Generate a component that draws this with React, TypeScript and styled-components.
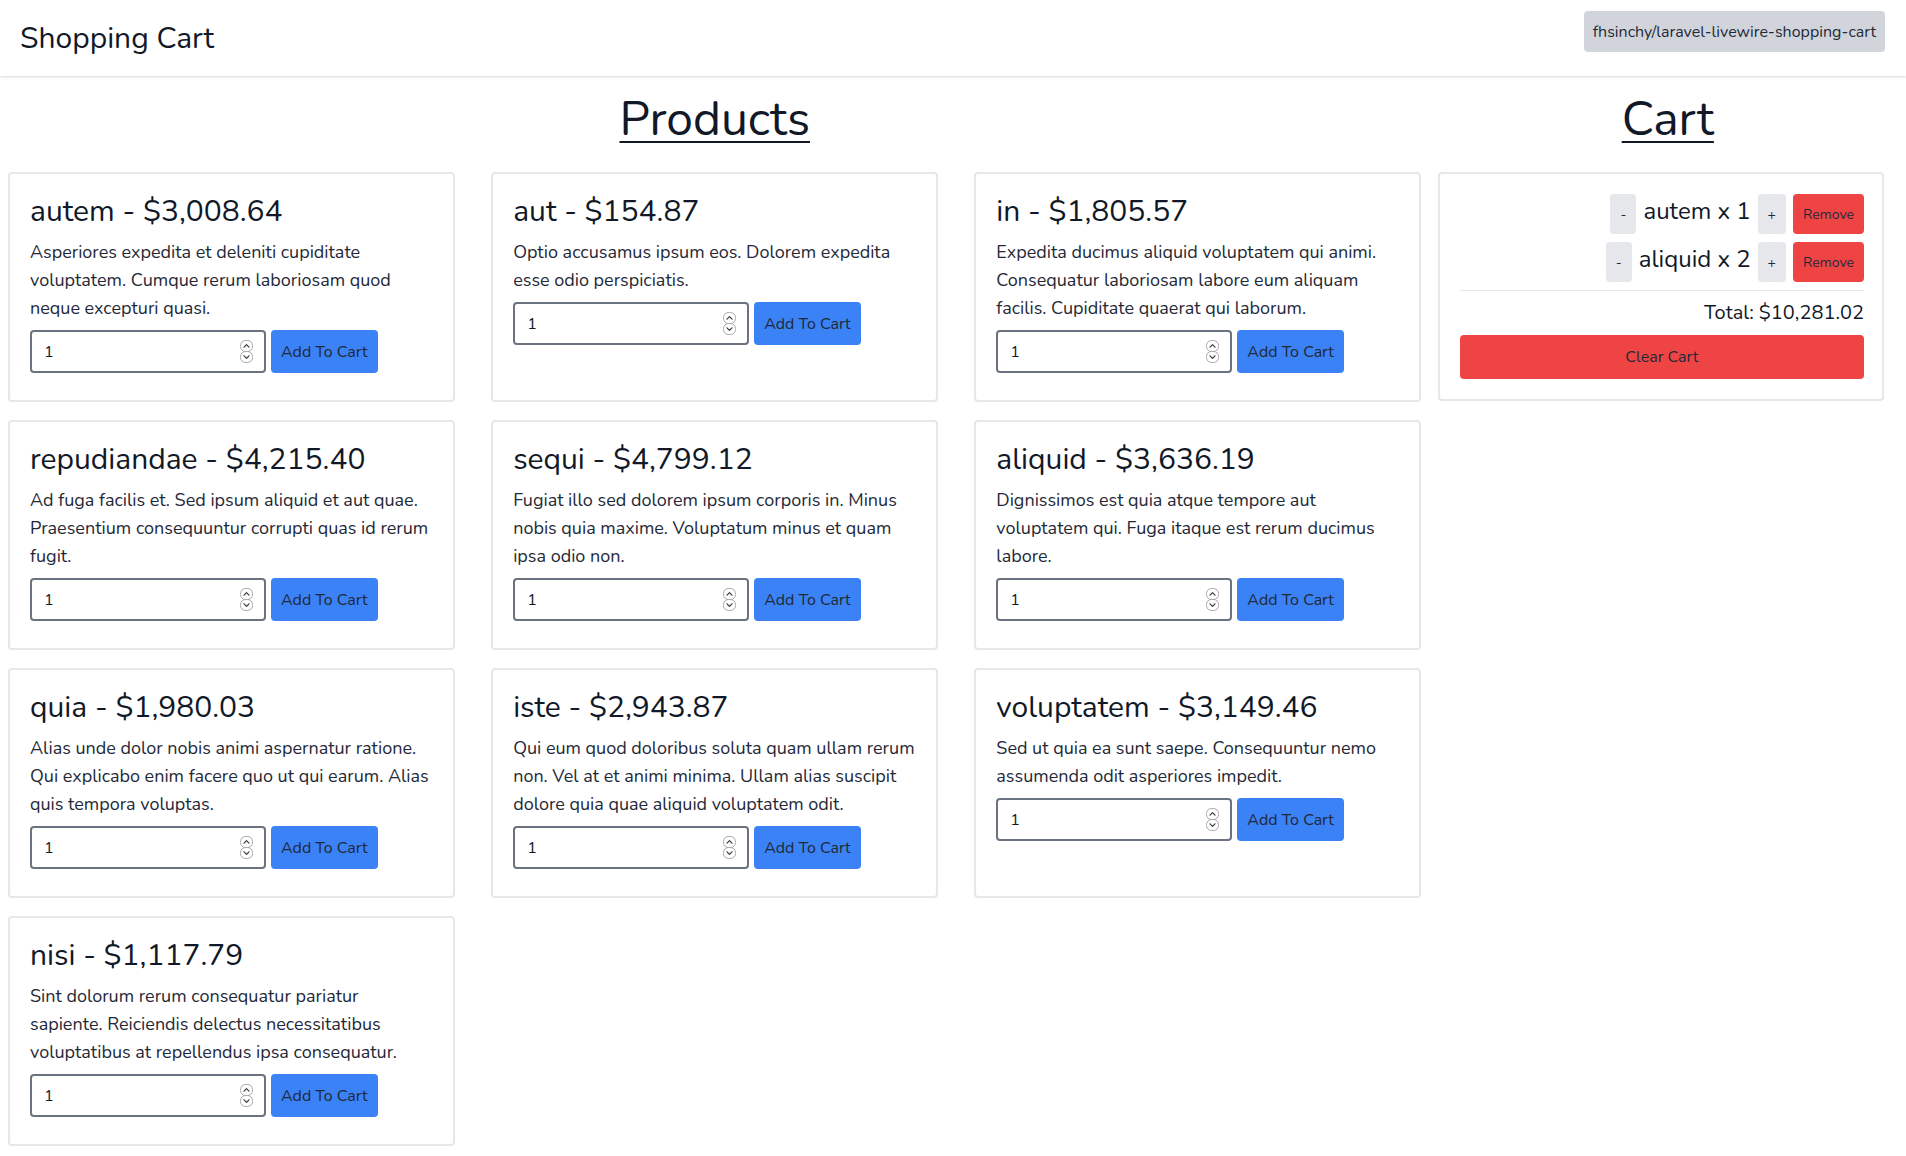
import React from 'react';
import styled, { createGlobalStyle } from 'styled-components';

const GlobalStyle = createGlobalStyle`
    html, body {
        margin: 0;
        padding: 0;
        background: #ffffff;
        font-family: 'Nunito', 'Liberation Sans', Arial, sans-serif;
        color: #111827;
    }
    * {
        box-sizing: border-box;
    }
`;

type Product = {
    name: string;
    price: string;
    description: string;
};

const products: Product[] = [
    {
        name: 'autem',
        price: '$3,008.64',
        description: 'Asperiores expedita et deleniti cupiditate voluptatem. Cumque rerum laboriosam quod neque excepturi quasi.',
    },
    { name: 'aut', price: '$154.87', description: 'Optio accusamus ipsum eos. Dolorem expedita esse odio perspiciatis.' },
    {
        name: 'in',
        price: '$1,805.57',
        description:
            'Expedita ducimus aliquid voluptatem qui animi. Consequatur laboriosam labore eum aliquam facilis. Cupiditate quaerat qui laborum.',
    },
    {
        name: 'repudiandae',
        price: '$4,215.40',
        description: 'Ad fuga facilis et. Sed ipsum aliquid et aut quae. Praesentium consequuntur corrupti quas id rerum fugit.',
    },
    {
        name: 'sequi',
        price: '$4,799.12',
        description: 'Fugiat illo sed dolorem ipsum corporis in. Minus nobis quia maxime. Voluptatum minus et quam ipsa odio non.',
    },
    {
        name: 'aliquid',
        price: '$3,636.19',
        description: 'Dignissimos est quia atque tempore aut voluptatem qui. Fuga itaque est rerum ducimus labore.',
    },
    {
        name: 'quia',
        price: '$1,980.03',
        description:
            'Alias unde dolor nobis animi aspernatur ratione. Qui explicabo enim facere quo ut qui earum. Alias quis tempora voluptas.',
    },
    {
        name: 'iste',
        price: '$2,943.87',
        description:
            'Qui eum quod doloribus soluta quam ullam rerum non. Vel at et animi minima. Ullam alias suscipit dolore quia quae aliquid voluptatem odit.',
    },
    {
        name: 'voluptatem',
        price: '$3,149.46',
        description: 'Sed ut quia ea sunt saepe. Consequuntur nemo assumenda odit asperiores impedit.',
    },
    {
        name: 'nisi',
        price: '$1,117.79',
        description:
            'Sint dolorum rerum consequatur pariatur sapiente. Reiciendis delectus necessitatibus voluptatibus at repellendus ipsa consequatur.',
    },
];

const cartItems = [
    { name: 'autem', quantity: 1 },
    { name: 'aliquid', quantity: 2 },
];

const NavBar = styled.header`
    display: flex;
    justify-content: space-between;
    align-items: flex-start;
    height: 76px;
    padding: 11px 21px 0 20px;
    box-shadow: 0 1px 3px rgba(0, 0, 0, 0.1), 0 1px 2px rgba(0, 0, 0, 0.06);
`;

const Brand = styled.h1`
    margin: 10px 0 0;
    font-size: 30px;
    line-height: 36px;
    font-weight: 400;
    color: #111827;
`;

const RepoBadge = styled.span`
    display: inline-flex;
    align-items: center;
    height: 41px;
    padding: 0 9px;
    border-radius: 4px;
    background: #d1d5db;
    color: #1f2937;
    font-size: 16px;
`;

const Main = styled.main`
    display: flex;
    align-items: flex-start;
`;

const ProductsColumn = styled.section`
    width: 75%;
`;

const CartColumn = styled.section`
    width: 25%;
`;

const SectionHeading = styled.h2`
    margin: 19px 0 29px;
    text-align: center;
    font-size: 48px;
    line-height: 48px;
    font-weight: 400;
    color: #111827;
    text-decoration: underline;
    text-decoration-thickness: 2px;
    text-underline-offset: 6px;
`;

const ProductGrid = styled.div`
    display: grid;
    grid-template-columns: repeat(3, 1fr);
    column-gap: 36px;
    row-gap: 18px;
    margin: 0 8px;
`;

const Card = styled.div<{ $bottom?: number }>`
    border: 2px solid #e5e7eb;
    border-radius: 4px;
    padding: 20px 20px ${({ $bottom }) => $bottom ?? 20}px;
    background: #ffffff;
`;

const CartCard = styled(Card)`
    margin: 0 22px 0 8px;
    padding-right: 18px;
`;

const ProductTitle = styled.h3`
    margin: 0 0 8px;
    font-size: 30px;
    line-height: 36px;
    font-weight: 400;
    color: #111827;
`;

const ProductDescription = styled.p`
    margin: 0 0 8px;
    font-size: 18px;
    line-height: 28px;
    color: #1f2937;
`;

const AddRow = styled.form`
    display: flex;
    gap: 5px;
`;

const InputWrap = styled.div`
    position: relative;
    width: 236px;
    height: 43px;
`;

const QuantityInput = styled.input`
    width: 100%;
    height: 100%;
    padding: 0 30px 0 12px;
    border: 2px solid #6b7280;
    border-radius: 4px;
    font-family: inherit;
    font-size: 16px;
    color: #111827;
    background: #ffffff;
    -moz-appearance: textfield;

    &::-webkit-inner-spin-button,
    &::-webkit-outer-spin-button {
        -webkit-appearance: none;
        margin: 0;
    }
`;

const Spinner = styled.svg`
    position: absolute;
    right: 13px;
    top: 10px;
    pointer-events: none;
`;

const SpinIcon: React.FunctionComponent = () => (
    <Spinner width="13" height="23" viewBox="0 0 13 23" fill="none">
        <rect x="0.5" y="0.5" width="12" height="11" rx="5" stroke="#a8a8a8" />
        <rect x="0.5" y="11.5" width="12" height="11" rx="5" stroke="#a8a8a8" />
        <path d="M4 7.2 L6.5 4.6 L9 7.2" stroke="#3a3a3a" strokeWidth="1.2" strokeLinecap="round" strokeLinejoin="round" />
        <path d="M4 15.8 L6.5 18.4 L9 15.8" stroke="#3a3a3a" strokeWidth="1.2" strokeLinecap="round" strokeLinejoin="round" />
    </Spinner>
);

const Button = styled.button<{ $variant: 'blue' | 'red' | 'gray'; $size?: 'sm' | 'md' }>`
    display: inline-flex;
    align-items: center;
    justify-content: center;
    border: none;
    border-radius: 4px;
    cursor: pointer;
    font-family: inherit;
    color: #1f2937;
    background: ${({ $variant }) => ($variant === 'blue' ? '#3b82f6' : $variant === 'red' ? '#ef4444' : '#e5e7eb')};
    font-size: ${({ $size }) => ($size === 'sm' ? '14px' : '16px')};
    padding: 0 10px;
`;

const AddButton = styled(Button)`
    height: 43px;
`;

const CartRow = styled.div`
    display: flex;
    justify-content: flex-end;
    align-items: flex-start;
    gap: 7px;
    height: 40px;
    margin-bottom: 8px;
`;

const RowButton = styled(Button)`
    height: 40px;
`;

const RemoveButton = styled(RowButton)`
    padding: 0 9px;
    width: 71px;
`;

const CartItemLabel = styled.span`
    font-size: 24px;
    line-height: 32px;
    margin-top: 1px;
    color: #111827;
`;

const Divider = styled.hr`
    margin: 0 0 8px;
    border: none;
    border-top: 1px solid #e5e7eb;
`;

const Total = styled.div`
    text-align: right;
    font-size: 20px;
    line-height: 28px;
    color: #111827;
    margin-bottom: 8px;
`;

const ClearButton = styled(Button)`
    width: 100%;
    height: 44px;
`;

const ProductCard: React.FunctionComponent<{ product: Product }> = ({ product }) => (
    <Card $bottom={27}>
        <ProductTitle>
            {product.name} - {product.price}
        </ProductTitle>
        <ProductDescription>{product.description}</ProductDescription>
        <AddRow onSubmit={(e) => e.preventDefault()}>
            <InputWrap>
                <QuantityInput type="number" min={1} defaultValue={1} />
                <SpinIcon />
            </InputWrap>
            <AddButton $variant="blue" type="submit">
                Add To Cart
            </AddButton>
        </AddRow>
    </Card>
);

const App: React.FunctionComponent = () => (
    <>
        <GlobalStyle />
        <NavBar>
            <Brand>Shopping Cart</Brand>
            <RepoBadge>fhsinchy/laravel-livewire-shopping-cart</RepoBadge>
        </NavBar>
        <Main>
            <ProductsColumn>
                <SectionHeading>Products</SectionHeading>
                <ProductGrid>
                    {products.map((product) => (
                        <ProductCard key={product.name} product={product} />
                    ))}
                </ProductGrid>
            </ProductsColumn>
            <CartColumn>
                <SectionHeading>Cart</SectionHeading>
                <CartCard>
                    {cartItems.map((item) => (
                        <CartRow key={item.name}>
                            <RowButton $variant="gray" $size="sm">
                                -
                            </RowButton>
                            <CartItemLabel>
                                {item.name} x {item.quantity}
                            </CartItemLabel>
                            <RowButton $variant="gray" $size="sm">
                                +
                            </RowButton>
                            <RemoveButton $variant="red" $size="sm">
                                Remove
                            </RemoveButton>
                        </CartRow>
                    ))}
                    <Divider />
                    <Total>Total: $10,281.02</Total>
                    <ClearButton $variant="red">Clear Cart</ClearButton>
                </CartCard>
            </CartColumn>
        </Main>
    </>
);

export default App;
